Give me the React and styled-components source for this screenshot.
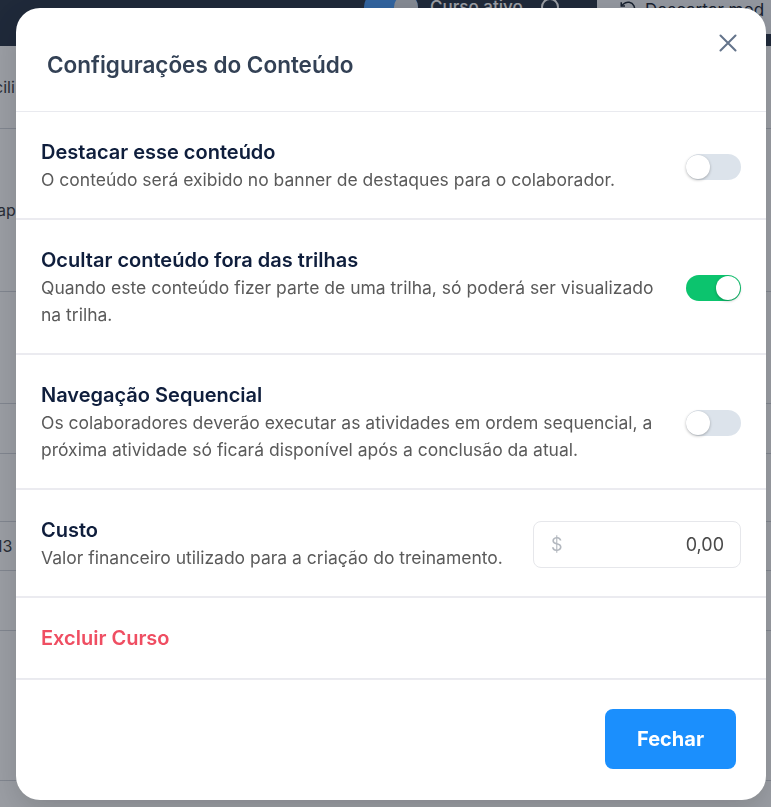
import styled, { createGlobalStyle, css } from 'styled-components';

const GlobalStyle = createGlobalStyle`
    html, body {
        margin: 0;
        padding: 0;
        height: 100%;
        overflow: hidden;
        font-family: Inter, "Liberation Sans", sans-serif;
        background: #ffffff;
    }
    #root{
        height: 100%;
    }
`;

/* page behind the modal */

const Page = styled.div`
    display: flex;
    flex-direction: column;
    height: 100%;
    background: #ffffff;
`;

const TopBar = styled.header`
    display: flex;
    align-items: flex-start;
    height: 46px;
    background: #2b3749;
    padding-left: 364px;
    box-sizing: border-box;
    flex-shrink: 0;
    overflow: hidden;
`;

const StatusSwitch = styled.div`
    width: 233px;
    display: flex;
    align-items: center;
    gap: 12px;
    margin-top: -8px;
    color: #ffffff;
    font-size: 17px;
    font-weight: 500;
    white-space: nowrap;
    flex-shrink: 0;
    i{
        width: 54px;
        height: 30px;
        border-radius: 15px;
        background: #4a9af5;
        position: relative;
        flex-shrink: 0;
    }
    i::after{
        content: "";
        position: absolute;
        right: 0;
        top: 3px;
        width: 24px;
        height: 24px;
        border-radius: 50%;
        background: #d9dce1;
    }
    b{
        width: 14px;
        height: 14px;
        border: 2px solid #fff;
        border-radius: 50%;
        margin-left: 6px;
        flex-shrink: 0;
    }
`;

const DiscardButton = styled.div`
    height: 34px;
    padding: 0 14px 0 22px;
    background: #f1f3f6;
    border-radius: 0 0 0 6px;
    color: #1f2937;
    font-size: 17px;
    display: flex;
    align-items: flex-start;
    gap: 8px;
    white-space: nowrap;
    flex: 1;
    line-height: 20px;
`;

const BgRow = styled.div`
    height: ${({ h }) => h}px;
    border-bottom: 1px solid #d3d6dc;
    display: flex;
    align-items: center;
    color: #3b3f46;
    font-size: 16px;
    flex-shrink: 0;
    white-space: nowrap;
    overflow: hidden;
    span{
        margin-left: ${({ shift }) => shift || 0}px;
    }
`;

const Overlay = styled.div`
    position: fixed;
    inset: 0;
    background: rgba(17, 24, 39, 0.42);
    display: flex;
    padding: 8px 5px 7px 16px;
`;

/* modal */

const Modal = styled.div`
    flex: 1;
    background: #ffffff;
    border-radius: 24px;
    display: flex;
    flex-direction: column;
    overflow: hidden;
    box-shadow: 0 10px 30px rgba(0, 0, 0, 0.15);
`;

const Header = styled.div`
    display: flex;
    justify-content: space-between;
    align-items: flex-start;
    height: 104px;
    box-sizing: border-box;
    padding: 0 26px 0 31px;
    border-bottom: 1px solid #e9eaef;
    flex-shrink: 0;
`;

const Title = styled.h2`
    margin: 43px 0 0;
    font-size: 22.5px;
    line-height: 28px;
    font-weight: 600;
    color: #334155;
`;

const CloseButton = styled.button`
    margin-top: 23px;
    width: 24px;
    height: 24px;
    padding: 0;
    border: 0;
    background: none;
    display: flex;
    align-items: center;
    justify-content: center;
    color: #64748b;
    cursor: pointer;
`;

const Section = styled.div`
    display: flex;
    align-items: center;
    gap: 28px;
    padding: 28px 25px 25px;
    border-bottom: 2px solid #ebebf0;
    ${({ compact }) => compact && css`
        padding: 28px 25px 28px;
    `}
`;

const Texts = styled.div`
    flex: 1;
    display: flex;
    flex-direction: column;
    gap: 2px;
`;

const Label = styled.div`
    font-size: 20px;
    line-height: 24px;
    font-weight: 600;
    color: ${({ danger }) => danger ? "#ef4e62" : "#0f1e3c"};
`;

const Hint = styled.div`
    font-size: 17.5px;
    line-height: 27px;
    color: #5a5a5a;
`;

const Track = styled.div`
    width: 55px;
    height: 26px;
    border-radius: 13px;
    background: ${({ on }) => on ? "#0cc46e" : "#dce3eb"};
    position: relative;
    flex-shrink: 0;
    &::after{
        content: "";
        position: absolute;
        top: 1px;
        left: ${({ on }) => on ? "30px" : "0"};
        width: 24px;
        height: 24px;
        border-radius: 50%;
        background: #ffffff;
        box-shadow: 0 1px 3px rgba(0, 0, 0, 0.28);
    }
`;

const MoneyField = styled.div`
    width: 208px;
    height: 47px;
    box-sizing: border-box;
    border: 1px solid #e6e7eb;
    border-radius: 8px;
    padding: 0 16px 0 17px;
    display: flex;
    align-items: center;
    justify-content: space-between;
    font-size: 18px;
    flex-shrink: 0;
    span{
        color: #b3b8bf;
    }
    strong{
        font-weight: 400;
        color: #4a4a4a;
    }
`;

const Footer = styled.div`
    display: flex;
    justify-content: flex-end;
    padding: 30px 30px 0;
    border-top: 1px solid #e9eaef;
    margin-top: -2px;
`;

const PrimaryButton = styled.button`
    width: 131px;
    height: 60px;
    border: 0;
    border-radius: 8px;
    background: #1b8ffd;
    color: #ffffff;
    font-family: inherit;
    font-size: 20px;
    font-weight: 700;
    cursor: pointer;
`;

const settings = [
    {
        label: "Destacar esse conteúdo",
        hint: "O conteúdo será exibido no banner de destaques para o colaborador.",
        on: false,
    },
    {
        label: "Ocultar conteúdo fora das trilhas",
        hint: "Quando este conteúdo fizer parte de uma trilha, só poderá ser visualizado na trilha.",
        on: true,
    },
    {
        label: "Navegação Sequencial",
        hint: "Os colaboradores deverão executar as atividades em ordem sequencial, a próxima atividade só ficará disponível após a conclusão da atual.",
        on: false,
    },
];

const bgRows = [
    { h: 82, text: "Facili", shift: -24 },
    { h: 162, text: "Etap", shift: -18 },
    { h: 111 },
    { h: 49 },
    { h: 67 },
    { h: 48, text: "13", shift: -4 },
    { h: 59 },
    { h: 149 },
];

function App() {
    return (
        <>
            <GlobalStyle />
            <Page>
                <TopBar>
                    <StatusSwitch>
                        <i />
                        Curso ativo
                        <b />
                    </StatusSwitch>
                    <DiscardButton>
                        <svg width="18" height="18" viewBox="0 0 24 24" fill="none" stroke="currentColor" strokeWidth="2">
                            <path d="M3 12a9 9 0 1 0 3-6.7L3 8" />
                            <path d="M3 3v5h5" />
                        </svg>
                        Descartar mod
                    </DiscardButton>
                </TopBar>
                {bgRows.map((row, i) => (
                    <BgRow key={i} h={row.h} shift={row.shift}>
                        {row.text && <span>{row.text}</span>}
                    </BgRow>
                ))}
            </Page>

            <Overlay>
                <Modal>
                    <Header>
                        <Title>Configurações do Conteúdo</Title>
                        <CloseButton aria-label="Fechar">
                            <svg width="18" height="18" viewBox="0 0 18 18" fill="none" stroke="currentColor" strokeWidth="2" strokeLinecap="round">
                                <path d="M1.5 1.5l15 15M16.5 1.5l-15 15" />
                            </svg>
                        </CloseButton>
                    </Header>

                    {settings.map((item) => (
                        <Section key={item.label}>
                            <Texts>
                                <Label>{item.label}</Label>
                                <Hint>{item.hint}</Hint>
                            </Texts>
                            <Track on={item.on ? 1 : 0} />
                        </Section>
                    ))}

                    <Section>
                        <Texts>
                            <Label>Custo</Label>
                            <Hint>Valor financeiro utilizado para a criação do treinamento.</Hint>
                        </Texts>
                        <MoneyField>
                            <span>$</span>
                            <strong>0,00</strong>
                        </MoneyField>
                    </Section>

                    <Section compact>
                        <Label danger>Excluir Curso</Label>
                    </Section>

                    <Footer>
                        <PrimaryButton>Fechar</PrimaryButton>
                    </Footer>
                </Modal>
            </Overlay>
        </>
    );
}

export default App;
